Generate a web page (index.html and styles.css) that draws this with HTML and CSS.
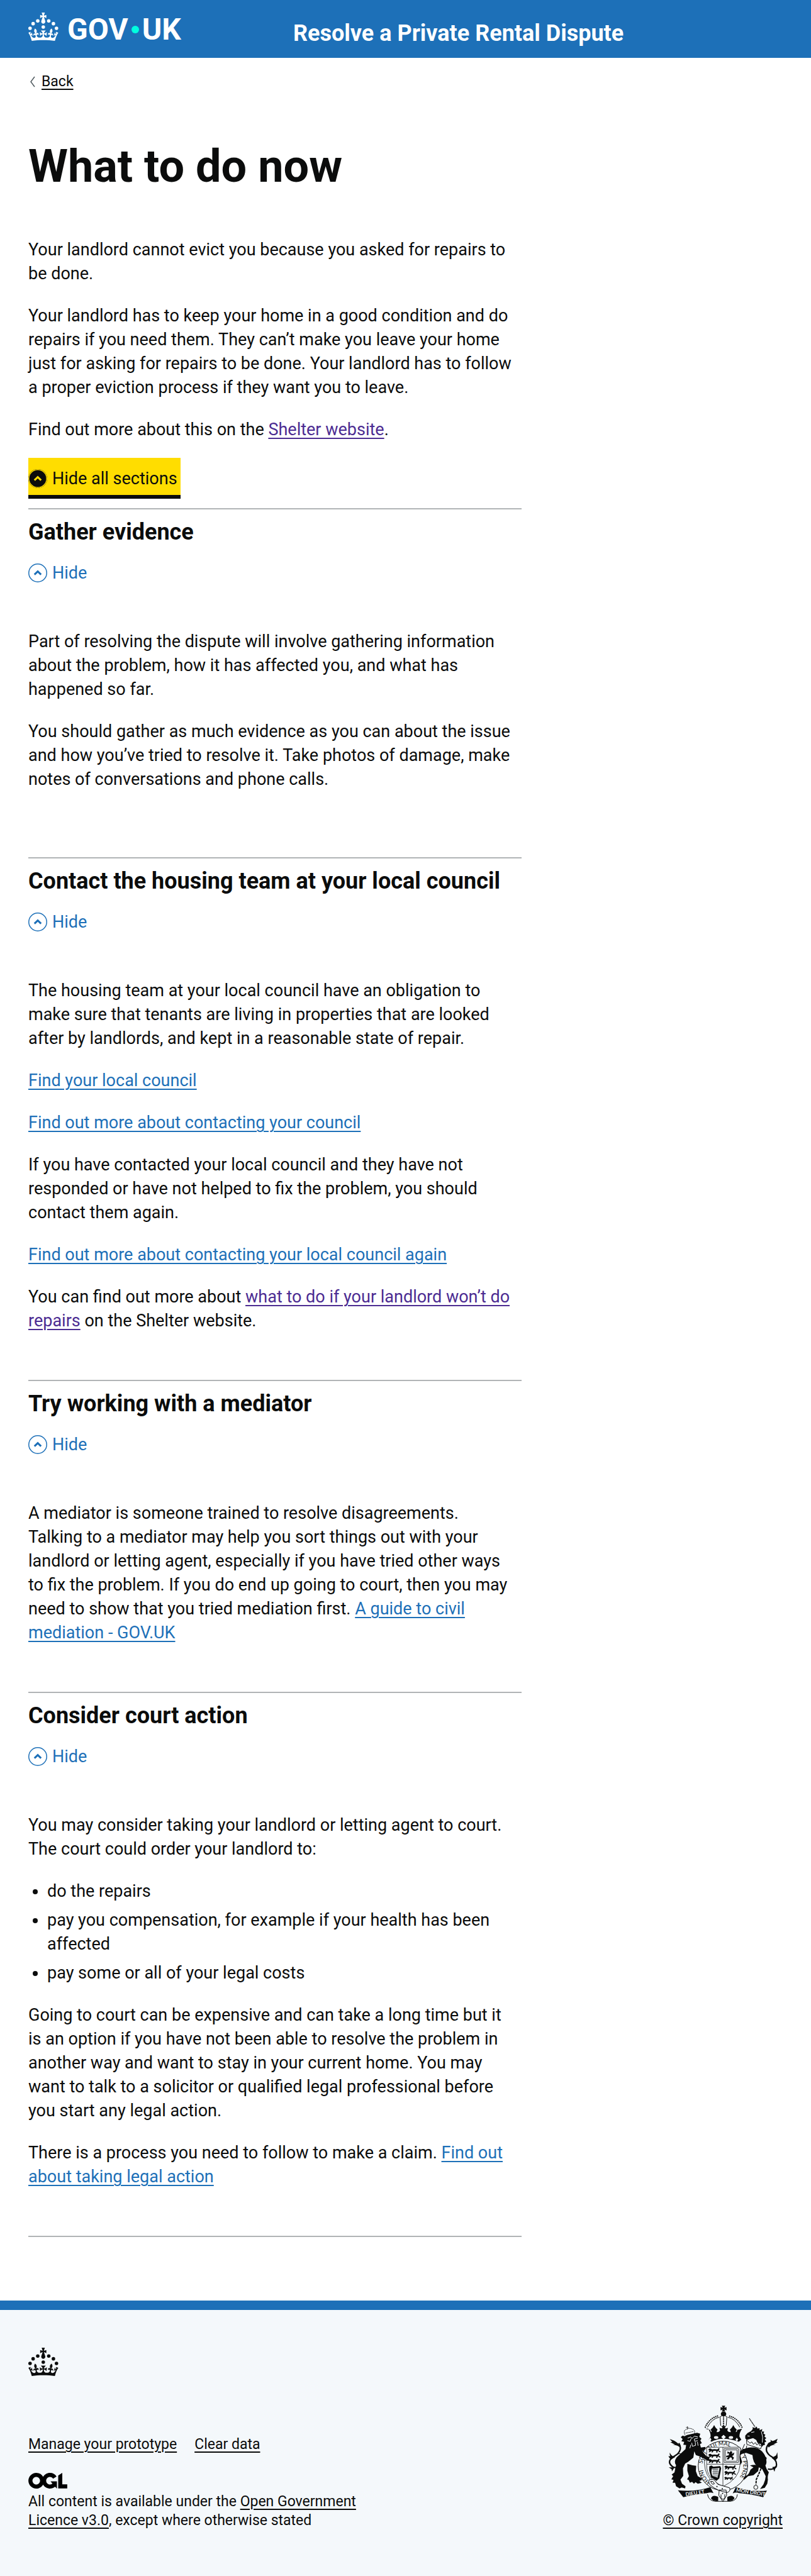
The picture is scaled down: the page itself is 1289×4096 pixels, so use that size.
FILE: index.html
```html
<!DOCTYPE html>
<html lang="en">
<head>
<meta charset="utf-8">
<meta name="viewport" content="width=device-width, initial-scale=1">
<title>What to do now – Resolve a Private Rental Dispute</title>
<link rel="stylesheet" href="styles.css">
</head>
<body>
<svg class="sprite" width="0" height="0" aria-hidden="true">
  <symbol id="crown" viewBox="0 0 64 60">
    <circle cx="20" cy="17.6" r="3.7"/><circle cx="10.2" cy="23.5" r="3.7"/><circle cx="3.7" cy="33.2" r="3.7"/><circle cx="31.7" cy="30.6" r="3.7"/><circle cx="43.3" cy="17.6" r="3.7"/><circle cx="53.2" cy="23.5" r="3.7"/><circle cx="59.7" cy="33.2" r="3.7"/>
    <path d="M33.1,9.8c.2-.1.3-.3.5-.5l4.6,2.4v-6.8l-4.6,1.5c-.1-.2-.3-.3-.5-.5l1.9-5.9h-6.7l1.9,5.9c-.2.1-.3.3-.5.5l-4.6-1.5v6.8l4.6-2.4c.1.2.3.3.5.5l-2.6,8c-.9,2.8,1.2,5.7,4.1,5.7h0c3,0,5.1-2.9,4.1-5.7l-2.6-8ZM37,37.9s-3.4,3.8-4.1,6.1c2.2,0,4.2-.5,6.4-2.8l-.7,8.5c-2-2.8-4.4-4.1-5.7-3.8.1,3.1.5,6.7,5.8,7.2,3.7.3,6.7-1.5,7-3.8.4-2.6-2-4.3-3.7-1.6-1.4-4.5,2.4-6.1,4.9-3.2-1.9-4.5-1.8-7.7,2.4-10.9,3,4,2.6,7.3-1.2,11.1,2.4-1.3,6.2,0,4,4.6-1.2-2.8-3.7-2.2-4.2.2-.3,1.7.7,3.7,3,4.2,1.9.3,4.7-.9,7-5.9-1.3,0-2.4.7-3.9,1.7l2.4-8c.6,2.3,1.4,3.7,2.2,4.5.6-1.6.5-2.8,0-5.3l5,1.8c-2.6,3.6-5.2,8.7-7.3,17.5-7.4-1.1-15.7-1.7-24.5-1.7h0c-8.8,0-17.1.6-24.5,1.7-2.1-8.9-4.7-13.9-7.3-17.5l5-1.8c-.5,2.5-.6,3.7,0,5.3.8-.8,1.6-2.3,2.2-4.5l2.4,8c-1.5-1-2.6-1.7-3.9-1.7,2.3,5,5.2,6.2,7,5.9,2.3-.4,3.3-2.4,3-4.2-.5-2.4-3-3.1-4.2-.2-2.2-4.6,1.6-6,4-4.6-3.7-3.7-4.2-7.1-1.2-11.1,4.2,3.2,4.3,6.4,2.4,10.9,2.5-2.8,6.3-1.3,4.9,3.2-1.8-2.7-4.1-1-3.7,1.6.3,2.3,3.3,4.1,7,3.8,5.4-.5,5.7-4.2,5.8-7.2-1.3-.2-3.7,1-5.7,3.8l-.7-8.5c2.2,2.3,4.2,2.7,6.4,2.8-.7-2.3-4.1-6.1-4.1-6.1h10.6,0Z"/>
  </symbol>
  <symbol id="chevron" viewBox="0 0 40 40">
    <circle class="ring" cx="20" cy="20" r="19"/>
    <path class="tip" d="M13 23.6 20 16.8 27 23.6"/>
  </symbol>
  <symbol id="passant" viewBox="0 0 86 28">
    <path d="M2 8Q4 1 13 2q8 0 10 6 17-4 33 0 8-2 8-8 9-1 7 6l-6 8q10 2 13 10l-8 1-8-8-6 7 5 4-12-1 3-9q-12-3-20 0l-3 8-9 1 4-9q-7-1-10 5l-10 4q-1-7 6-10Q2 15 2 8z"/>
  </symbol>
</svg>

<header class="header">
  <div class="container header-grid">
    <a class="logo" href="#" aria-label="GOV.UK">
      <svg class="crown"><use href="#crown"/></svg>
      <span class="logo-text">GOV<i class="dot"></i>UK</span>
    </a>
    <a class="service" href="#">Resolve a Private Rental Dispute</a>
  </div>
</header>

<div class="container">
  <a class="back" href="#">
    <svg class="back-arrow" viewBox="0 0 9 18"><path d="M8 1 2 9l6 8"/></svg>
    <span>Back</span>
  </a>
  <main class="grid">
    <div class="column">
      <h1>What to do now</h1>
      <div class="intro">
        <p>Your landlord cannot evict you because you asked for repairs to be done.</p>
        <p>Your landlord has to keep your home in a good condition and do repairs if you need them. They can’t make you leave your home just for asking for repairs to be done. Your landlord has to follow a proper eviction process if they want you to leave.</p>
        <p>Find out more about this on the <a class="visited" href="#">Shelter website</a>.</p>
      </div>

      <button class="toggle toggle-all" type="button"><svg class="chevron"><use href="#chevron"/></svg>Hide all sections</button>

      <section class="section section-long">
        <h2>Gather evidence</h2>
        <button class="toggle" type="button"><svg class="chevron"><use href="#chevron"/></svg>Hide</button>
        <p>Part of resolving the dispute will involve gathering information about the problem, how it has affected you, and what has happened so far.</p>
        <p>You should gather as much evidence as you can about the issue and how you’ve tried to resolve it. Take photos of damage, make notes of conversations and phone calls.</p>
      </section>

      <section class="section">
        <h2>Contact the housing team at your local council</h2>
        <button class="toggle" type="button"><svg class="chevron"><use href="#chevron"/></svg>Hide</button>
        <p>The housing team at your local council have an obligation to make sure that tenants are living in properties that are looked after by landlords, and kept in a reasonable state of repair.</p>
        <p><a href="#">Find your local council</a></p>
        <p><a href="#">Find out more about contacting your council</a></p>
        <p>If you have contacted your local council and they have not responded or have not helped to fix the problem, you should contact them again.</p>
        <p><a href="#">Find out more about contacting your local council again</a></p>
        <p>You can find out more about <a class="visited" href="#">what to do if your landlord won’t do repairs</a> on the Shelter website.</p>
      </section>

      <section class="section">
        <h2>Try working with a mediator</h2>
        <button class="toggle" type="button"><svg class="chevron"><use href="#chevron"/></svg>Hide</button>
        <p>A mediator is someone trained to resolve disagreements. Talking to a mediator may help you sort things out with your landlord or letting agent, especially if you have tried other ways to fix the problem. If you do end up going to court, then you may need to show that you tried mediation first. <a href="#">A guide to civil mediation - GOV.UK</a></p>
      </section>

      <section class="section">
        <h2>Consider court action</h2>
        <button class="toggle" type="button"><svg class="chevron"><use href="#chevron"/></svg>Hide</button>
        <p>You may consider taking your landlord or letting agent to court. The court could order your landlord to:</p>
        <ul>
          <li>do the repairs</li>
          <li>pay you compensation, for example if your health has been affected</li>
          <li>pay some or all of your legal costs</li>
        </ul>
        <p>Going to court can be expensive and can take a long time but it is an option if you have not been able to resolve the problem in another way and want to stay in your current home. You may want to talk to a solicitor or qualified legal professional before you start any legal action.</p>
        <p>There is a process you need to follow to make a claim. <a href="#">Find out about taking legal action</a></p>
      </section>
    </div>
  </main>
</div>

<footer class="footer">
  <div class="container">
    <svg class="crown"><use href="#crown"/></svg>
    <div class="footer-meta">
      <div class="footer-left">
        <nav class="footer-links">
          <a href="#">Manage your prototype</a>
          <a href="#">Clear data</a>
        </nav>
        <svg class="ogl" viewBox="0 0 483.2 195.7" role="img" aria-label="Open Government Licence"><path d="M421.5 142.8V.1l-50.7 32.3v161.1h112.4v-50.7zm-122.3-9.6A47.12 47.12 0 0 1 221 97.8c0-26 21.1-47.1 47.1-47.1 16.7 0 31.4 8.7 39.7 21.8l42.7-27.2A97.63 97.63 0 0 0 268.1 0c-36.5 0-68.3 20.1-85.1 49.7A98 98 0 0 0 97.8 0C43.9 0 0 43.9 0 97.8s43.9 97.8 97.8 97.8c36.5 0 68.3-20.1 85.1-49.7a97.76 97.76 0 0 0 149.6 25.4l19.4 22.2h3v-87.8h-80l24.3 27.5zM97.8 145c-26 0-47.1-21.1-47.1-47.1s21.1-47.1 47.1-47.1 47.1 21.1 47.1 47.1S123.8 145 97.8 145"/></svg>
        <span class="licence">All content is available under the <a href="#">Open Government Licence v3.0</a>, except where otherwise stated</span>
      </div>
      <a class="copyright" href="#">
        <svg class="crest" viewBox="84 75 696 612" aria-hidden="true">
          <!-- crown -->
          <path d="M425 76h22l-6 13 14-5v22l-14-6 6 13h-22l6-13-14 6V84l14 5z"/>
          <ellipse cx="436" cy="128" rx="17" ry="14"/>
          <path class="line" d="M418 203 414 146q22-16 43 0l-4 57M333 213Q362 158 409 149M540 213Q510 158 463 149"/>
          <path class="beads" d="M436 142v62M320 212Q345 155 404 140M553 212Q528 155 468 140"/>
          <path d="M318 222l34 8q-2 10 8 14 0-9-6-16 14-10 22-29 8 19 22 29-6 7-6 16 14 2 22-10l-4-18q10 6 20 2l-8-13h30l-8 13q10 4 20-2l-4 18q8 12 22 10 0-9-6-16 14-10 22-29 8 19 22 29-6 7-6 16 10-4 8-14l32-8q-18 26-17 50l12 20-16 13q-108-38-174 0l-17-13 12-20q1-24-16-50z"/>
          <g class="paper"><path d="M436 261l15 14-15 14-15-14zM352 279l7 13-9 11-9-11zM520 279l9 13-9 11-8-11z"/><ellipse cx="389" cy="278" rx="14" ry="9"/><ellipse cx="483" cy="278" rx="14" ry="9"/></g>
          <!-- garter -->
          <circle class="paper line" cx="432" cy="458" r="157"/>
          <path id="garter" fill="none" d="M356 564A130 130 0 1 1 508 564"/>
          <path id="garter-r" fill="none" d="M546 395A130 130 0 0 1 470 582"/>
          <g class="motto"><text><textPath href="#garter" startOffset="4">HONI</textPath></text><text><textPath href="#garter" startOffset="136">SOIT QUI MAL</textPath></text><text><textPath href="#garter-r" startOffset="4">Y PENSE</textPath></text></g>
          <path class="paper thin" d="M329 340h212v112q-4 88-108 138Q325 540 329 452z"/>
          <path class="thin" fill="none" d="M316 400Q306 490 352 545M432 340v250M330 448h210M440 349h90v88h-90zM448 357h74v72h-74z"/>
          <use href="#passant" x="338" y="344" width="88" height="32"/><use href="#passant" x="338" y="378" width="88" height="32"/><use href="#passant" x="338" y="412" width="88" height="32"/>
          <use href="#passant" x="440" y="452" width="88" height="34"/><use href="#passant" x="440" y="487" width="84" height="34"/><use href="#passant" x="440" y="522" width="66" height="32"/>
          <path d="M462 366l12 8 8-10 10 6-4 12 16-8-4 16-10 6 12 10-6 14-8-2 2-10-12-4-10 14-14-2 12-14-14 2 2-10 14-2 4-12-12 0z"/>
          <path d="M345 462l14-6 12 8 44-4 6 14-12 64-18 16-34-22-12-44zM362 476q-8 26 4 46l32 12 12-62z" fill-rule="evenodd"/>
          <path class="hair" d="M372 476v48M380 474v54M388 474v58M396 473v58M364 482l40-2M364 496l40-4M366 508l36-4"/>
          <!-- belt and pendant -->
          <path class="paper line" d="M408 612h44l4 34-24 40-26-40zM344 548q24-10 38 6l18 22 74 22q10 20-14 30-60-8-104-44-18-12-12-36z"/>
          <path class="line" fill="none" d="M354 556q16-4 24 16-16 12-24-16M420 640v22q12 18 24 0v-22"/>
          <circle cx="394" cy="590" r="4"/><circle cx="428" cy="604" r="4"/><circle cx="430" cy="634" r="4"/>
          <!-- lion -->
          <path class="line beads-fine" fill="none" d="M191 262Q178 232 200 226q20-12 40 0 20 8 8 32M206 208v18M198 214h16M195 250l50-10"/>
          <path d="M188 270l16-8 64-14 20 6-6 20 14 12-8 10 10 18-12 6 6 22-16 2 44-6 2 14-22 14 28 32 18 4-2 24-30-2-20-22-34-12-10-24-6 40-32 26-20 12-14 30 2 48-18 24 10 26 22 16-2 14-22-6-14 6-22-14-6-22-16 0 6-18-14-4 12-20-10-10 18-14 10-46q-16-22 4-50l56-52 4-26-18-2 6-18-18-4 8-14-12-12 12-10z"/>
          <path d="M206 446q30 10 56 12l-2 34 12 32 26 14-2 12-14 4 16 12-26 6-14-10-10 10-12-12-14 6-8-18-10-4 12-20-10-34z"/>
          <path class="cut" d="M208 282l20-8 8 10 14-14 22 4M206 298l18 4 6-18M272 282l-22 6 2 14 20-4M234 312l4 22 20-6-2-22M228 324l-6 22M270 306l4 24M262 400l30 20M304 410l24 14"/>
          <path class="tail" d="M162 440Q146 482 112 464 82 440 98 418 114 400 140 386 176 352 152 314"/>
          <path d="M162 346Q156 306 94 288l16 18-12 2 30 16-18 2q38-2 52 20zM130 402q-24-2-36-28-2 16 4 24l-12-2q6 18 18 20zM124 468l-16 26-2-14-18-12zM130 396q20-20 38-12-6-10-20-4z"/>
          <!-- unicorn -->
          <path class="horn" d="M600 157 637 212"/>
          <path d="M574 266l14-16 22-12 12-14-2-12 16 6 10-10 6 14 12-4 2 14 16-8-2 16 14 0-4 14 12 6-6 12 12 10-10 8 10 14-12 6 4 14-12 4-10 12-4-20-22-8-8-18-20-12-28 8-12 4-10-10z"/>
          <path class="cut" d="M612 246l20-4M676 240q14 36 6 70M588 268l14 2"/>
          <path class="line" fill="none" d="M582 294l2 28 88 28 8-26-14 6-6-16-12 12-10-16-12 12-10-16-12 8zM570 320l-14 32 22 4 6-26"/>
          <path d="M544 362q54-32 106-16 38 16 52 54 14 38 0 56 6 26 22 44-10 24-6 46l-4 26-16 26-30 8 22-30 10-28 4-24-22-44-32-18q-28-26-30-72l-40-14q-36 4-38 18l12 40-10 18q-14-50 0-90z"/>
          <path d="M604 456q30-8 58 0l-6 36-30 26-34 6-28 26 8-26 14-6 10-10 12-26 18-14z"/>
          <path class="tail" d="M718 478Q752 488 772 458 778 418 732 394 690 360 722 320 734 306 758 302"/>
          <path d="M716 332Q714 306 738 308l-4-16 14 10 32-16-8 20 8 2-26 14 14 2q-32 0-44 18zM742 408l28-16 8-20 2 36-16 18zM746 466l14 30 4-18 14-16z"/>
          <path class="chain" d="M688 386l18 24-8 34-24 32-14 34-16 36-2 32"/>
          <circle class="line" fill="none" cx="641" cy="595" r="13"/>
          <!-- ribbons -->
          <path d="M146 614q110 12 206-20l20 38q-20-8-40 0-80 6-152 26z"/><path d="M514 594q96 32 198 22l-24 42q-70-20-152-26-20-8-42 2z"/>
          <path class="line" fill="none" d="M334 640q8 42 50 44h96q40-4 44-44"/>
          <path d="M356 664q12-26 46-8v26q-36 4-46-18zM506 664q-12-26-46-8v26q36 4 46-18z"/>
          <g class="ribbon-text"><text x="196" y="651" transform="rotate(-9 196 651)">DIEU ET</text><text x="515" y="622" transform="rotate(9 515 622)">MON DROIT</text></g>
        </svg>
        <span>© Crown copyright</span>
      </a>
    </div>
  </div>
</footer>
</body>
</html>
```
FILE: styles.css
```css
* { box-sizing: border-box; }

body {
  margin: 0;
  background: #fff;
  color: #0b0c0c;
  font: 27px/38px Roboto, "Liberation Sans", sans-serif;
}

.sprite { position: absolute; }

a {
  color: #1d70b8;
  text-decoration-thickness: 2px;
  text-underline-offset: 4px;
}
a.visited { color: #4c2c92; }

.container { margin: 0 45px; }

.crown {
  display: block;
  flex: none;
  width: 48px;
  height: 45px;
  fill: currentColor;
}

/* Header */
.header {
  padding: 20px 0 18px;
  background: #1d70b8;
  color: #fff;
}
.header-grid {
  display: grid;
  grid-template-columns: 1fr 2fr;
  column-gap: 32px;
  align-items: baseline;
}
.header a {
  color: inherit;
  text-decoration: none;
}
.logo {
  display: flex;
  gap: 14px;
}
.logo-text {
  display: flex;
  font-size: 48px;
  font-weight: 700;
  line-height: 54px;
}
.dot {
  width: 12px;
  height: 12px;
  margin: 21px 5px 0;
  border-radius: 50%;
  background: #00ffe0;
}
.service {
  font-size: 36px;
  font-weight: 700;
  line-height: 42px;
}

/* Back link */
.back {
  display: flex;
  align-items: center;
  gap: 10px;
  width: fit-content;
  margin-top: 23px;
  padding-left: 2px;
  color: inherit;
  font-size: 23px;
  line-height: 30px;
  text-decoration: none;
}
.back span {
  text-decoration: underline 2px;
  text-underline-offset: 4px;
}
.back-arrow {
  width: 9px;
  height: 18px;
  fill: none;
  stroke: #505a5f;
  stroke-width: 1.5;
}

/* Main column */
.grid {
  display: grid;
  grid-template-columns: repeat(3, 1fr);
  gap: 45px;
  padding: 82px 0 101px;
}
.column { grid-column: span 2; }

h1 {
  margin: 0 0 76px;
  font-size: 72px;
  line-height: 75px;
}
h2 {
  margin: 0 0 23px;
  font-size: 36px;
  line-height: 45px;
}
p, ul {
  max-width: 774px;
  margin: 0 0 29px;
}
.intro p:last-child { margin-bottom: 26px; }

ul { padding-left: 30px; }
li + li { margin-top: 8px; }

.toggle {
  display: flex;
  align-items: center;
  gap: 8px;
  margin: 0 0 71px;
  padding: 0;
  border: 0;
  background: none;
  color: #1d70b8;
  font: inherit;
}
.chevron {
  width: 30px;
  height: 30px;
  fill: none;
  stroke: currentColor;
}
.ring { stroke-width: 2; }
.tip { stroke-width: 4; }

.toggle-all {
  margin: 0 0 15px;
  padding: 14px 5px 7px 0;
  border-bottom: 6px solid #0b0c0c;
  background: #fd0;
  color: #0b0c0c;
}
.toggle-all .chevron {
  border-radius: 50%;
  background: #0b0c0c;
  stroke: #fd0;
}
.toggle-all .ring, .toggle-all .chevron { outline: 0; }

.section {
  padding: 14px 0 46px;
  border-top: 2px solid #b1b4b6;
}
.section-long { padding-bottom: 76px; }
.section:last-child { border-bottom: 2px solid #b1b4b6; }

/* Footer */
.footer {
  padding: 60px 0 73px;
  border-top: 15px solid #1d70b8;
  background: #f4f8fb;
  font-size: 23px;
  line-height: 30px;
}
.footer a { color: inherit; }
.footer-meta {
  display: flex;
  justify-content: space-between;
  align-items: flex-end;
  margin-top: 47px;
}
.footer-left {
  display: flex;
  flex-direction: column;
  max-width: 580px;
}
.footer-links {
  display: flex;
  gap: 28px;
  margin-bottom: 30px;
}
.ogl {
  width: 62px;
  height: 25px;
  margin-bottom: 6px;
}
.copyright {
  display: flex;
  flex-direction: column;
  align-items: center;
  gap: 15px;
}

/* Coat of arms */
.crest {
  width: 174px;
  height: 153px;
  fill: #0b0c0c;
}
.crest .paper { fill: #f4f8fb; }
.crest .line, .crest .thin, .crest .hair, .crest .tail, .crest .cut,
.crest .beads, .crest .beads-fine, .crest .horn, .crest .chain { stroke: #0b0c0c; }
.crest .line { stroke-width: 4; }
.crest path.line:not(.paper), .crest .tail, .crest .beads, .crest .cut,
.crest .horn, .crest .chain { fill: none; }
.crest .thin { stroke-width: 3; }
.crest .hair { stroke-width: 2; }
.crest .tail { stroke-width: 9; }
.crest .cut { stroke: #f4f8fb; stroke-width: 4; }
.crest .beads { stroke-width: 9; stroke-linecap: round; stroke-dasharray: 0 12; }
.crest .beads-fine { stroke-dasharray: 5 2; }
.crest .horn { stroke-width: 5; stroke-dasharray: 7 2; }
.crest .chain { stroke-width: 8; stroke-dasharray: 16 5; }
.crest text { font-family: Lato, "Liberation Sans", sans-serif; }
.motto { font-size: 36px; }
.ribbon-text { fill: #f4f8fb; font-size: 32px; font-weight: 700; }
```
